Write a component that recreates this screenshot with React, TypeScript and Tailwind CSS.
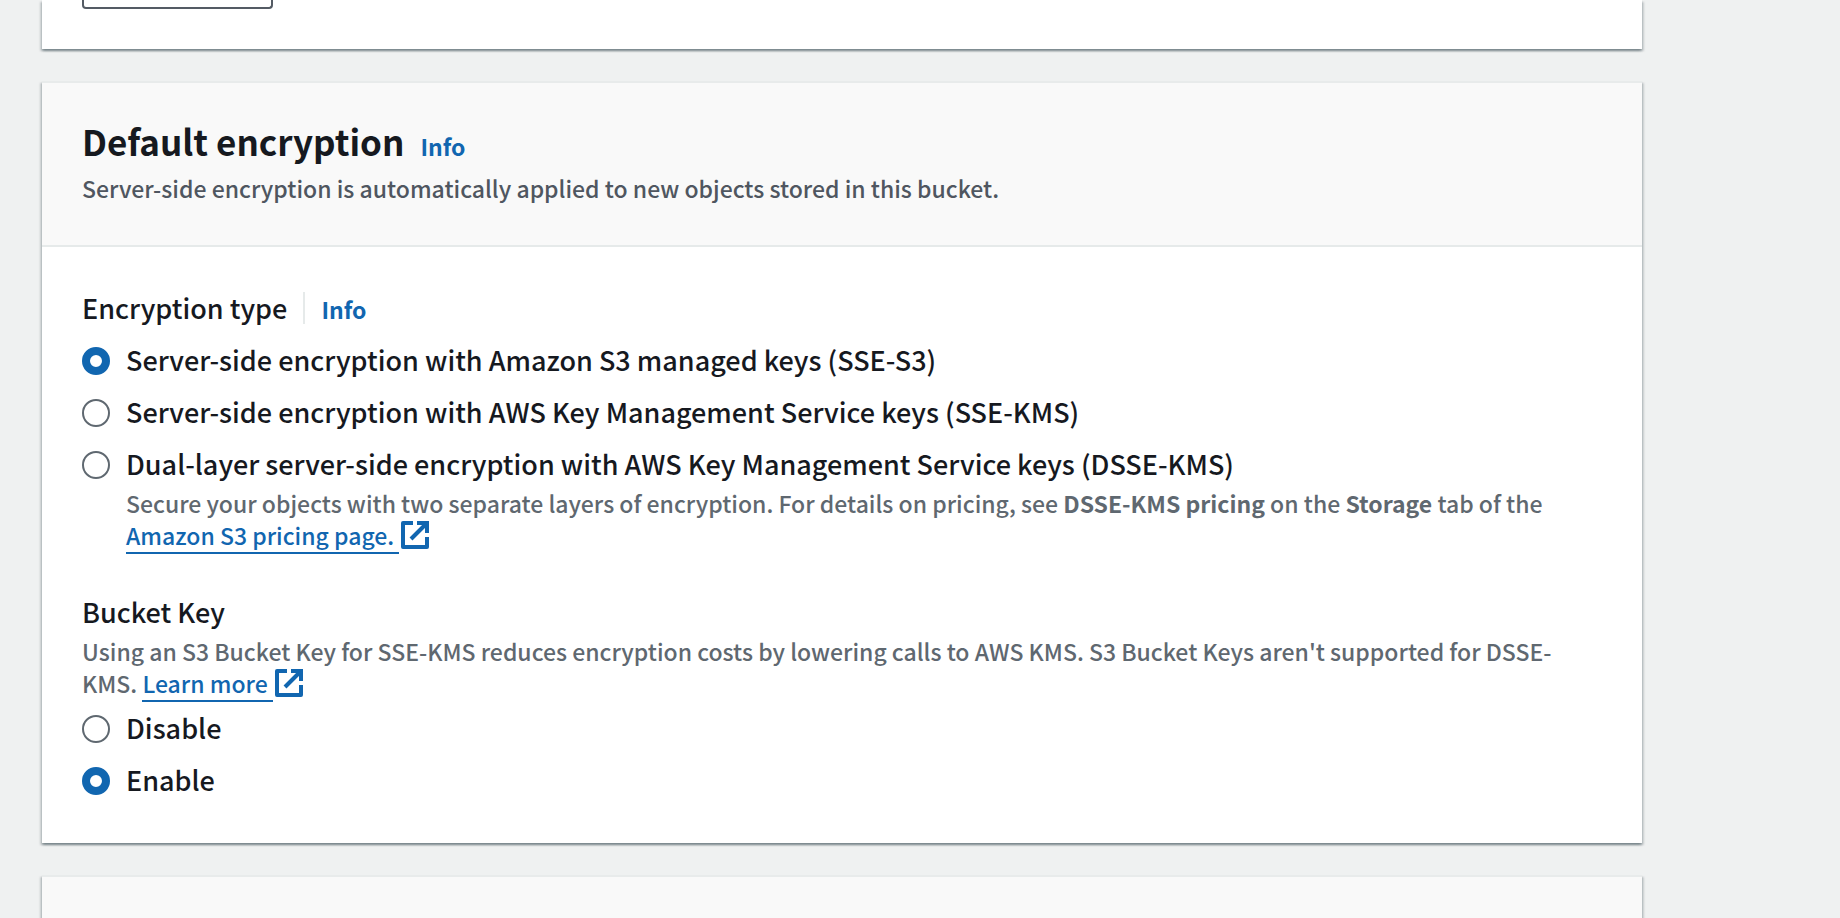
import { useState, type ReactNode } from 'react'

const CARD =
  'shadow-[0_2px_2px_0_rgba(0,28,36,0.3),2px_2px_2px_0_rgba(0,28,36,0.15),-2px_2px_2px_0_rgba(0,28,36,0.15)]'

function ExternalLink({ children }: { children: ReactNode }) {
  return (
    <a href="#" className="text-[#1166b0]">
      <span className="border-b-2 border-[#1166b0]">{children}&nbsp;</span>
      <svg
        viewBox="0 0 16 16"
        className="inline-block size-8 align-top"
        fill="none"
        stroke="currentColor"
        strokeWidth="2"
        aria-hidden="true"
      >
        <path d="M9 2h5v5" />
        <path d="M6 10l8-8" />
        <path d="M14 9v5H2V2h5" strokeLinejoin="round" />
      </svg>
    </a>
  )
}

function RadioOption({
  name,
  value,
  selected,
  onSelect,
  label,
  children,
}: {
  name: string
  value: string
  selected: string
  onSelect: (value: string) => void
  label: string
  children?: ReactNode
}) {
  const id = `${name}-${value}`
  return (
    <div className="flex gap-4">
      <input
        type="radio"
        id={id}
        name={name}
        checked={selected === value}
        onChange={() => onSelect(value)}
        className="mt-2 size-7 shrink-0 appearance-none rounded-full border-2 border-[#5f6870] bg-white checked:border-8 checked:border-[#1166b0]"
      />
      <div className="min-w-0">
        <label htmlFor={id} className="block text-[27px] leading-[42px]">
          {label}
        </label>
        {children}
      </div>
    </div>
  )
}

export default function App() {
  const [encryption, setEncryption] = useState('sse-s3')
  const [bucketKey, setBucketKey] = useState('enable')

  return (
    <main className="flex min-h-screen flex-col gap-8 bg-[#eff1f1] pr-[198px] pl-[42px] font-['Noto_Sans_CJK_SC','Noto_Sans',sans-serif] font-medium text-[#16191f]">
      <section className={`bg-white px-10 pb-10 ${CARD}`}>
        <button
          type="button"
          aria-label="Add tag"
          className="block h-[9px] w-[191px] rounded-b border-2 border-t-0 border-[#545b64] bg-white"
        />
      </section>

      <section className={`border-t-2 border-[#e8ebeb] bg-white ${CARD}`}>
        <header className="border-b-2 border-[#e6eaea] bg-[#f9f9f9] px-10 pt-[34px] pb-[41px]">
          <div className="flex items-baseline gap-4">
            <h2 className="text-[35px] leading-[48px] font-bold">Default encryption</h2>
            <a href="#" className="text-[23px] leading-8 font-bold text-[#1166b0]">
              Info
            </a>
          </div>
          <p className="mt-[7px] text-[23px] leading-8 text-[#4f5660]">
            Server-side encryption is automatically applied to new objects stored in this bucket.
          </p>
        </header>

        <div className="px-10 pt-10 pb-[42px]">
          <fieldset>
            <legend className="mb-2.5 flex items-baseline gap-4 text-[27px] leading-[42px]">
              <span>Encryption type</span>
              <span className="h-8 w-0.5 self-center bg-[#e6eaea]" />
              <a href="#" className="text-[23px] leading-8 font-bold text-[#1166b0]">
                Info
              </a>
            </legend>
            <div className="flex flex-col gap-2.5">
              <RadioOption
                name="encryption"
                value="sse-s3"
                selected={encryption}
                onSelect={setEncryption}
                label="Server-side encryption with Amazon S3 managed keys (SSE-S3)"
              />
              <RadioOption
                name="encryption"
                value="sse-kms"
                selected={encryption}
                onSelect={setEncryption}
                label="Server-side encryption with AWS Key Management Service keys (SSE-KMS)"
              />
              <RadioOption
                name="encryption"
                value="dsse-kms"
                selected={encryption}
                onSelect={setEncryption}
                label="Dual-layer server-side encryption with AWS Key Management Service keys (DSSE-KMS)"
              >
                <p className="mt-0.5 text-[23px] leading-8 text-[#5f6870]">
                  Secure your objects with two separate layers of encryption. For details on pricing, see{' '}
                  <b>DSSE-KMS pricing</b> on the <b>Storage</b> tab of the{' '}
                  <ExternalLink>Amazon S3 pricing page.</ExternalLink>
                </p>
              </RadioOption>
            </div>
          </fieldset>

          <fieldset className="mt-10">
            <legend className="text-[27px] leading-[42px]">Bucket Key</legend>
            <p className="mt-0.5 mb-2 text-[23px] leading-8 text-[#5f6870]">
              Using an S3 Bucket Key for SSE-KMS reduces encryption costs by lowering calls to AWS KMS. S3 Bucket
              Keys aren't supported for DSSE-KMS. <ExternalLink>Learn more</ExternalLink>
            </p>
            <div className="flex flex-col gap-2.5">
              <RadioOption
                name="bucket-key"
                value="disable"
                selected={bucketKey}
                onSelect={setBucketKey}
                label="Disable"
              />
              <RadioOption
                name="bucket-key"
                value="enable"
                selected={bucketKey}
                onSelect={setBucketKey}
                label="Enable"
              />
            </div>
          </fieldset>
        </div>
      </section>

      <section className={`flex-1 border-t-2 border-[#e8ebeb] bg-[#f9f9f9] ${CARD}`} />
    </main>
  )
}
